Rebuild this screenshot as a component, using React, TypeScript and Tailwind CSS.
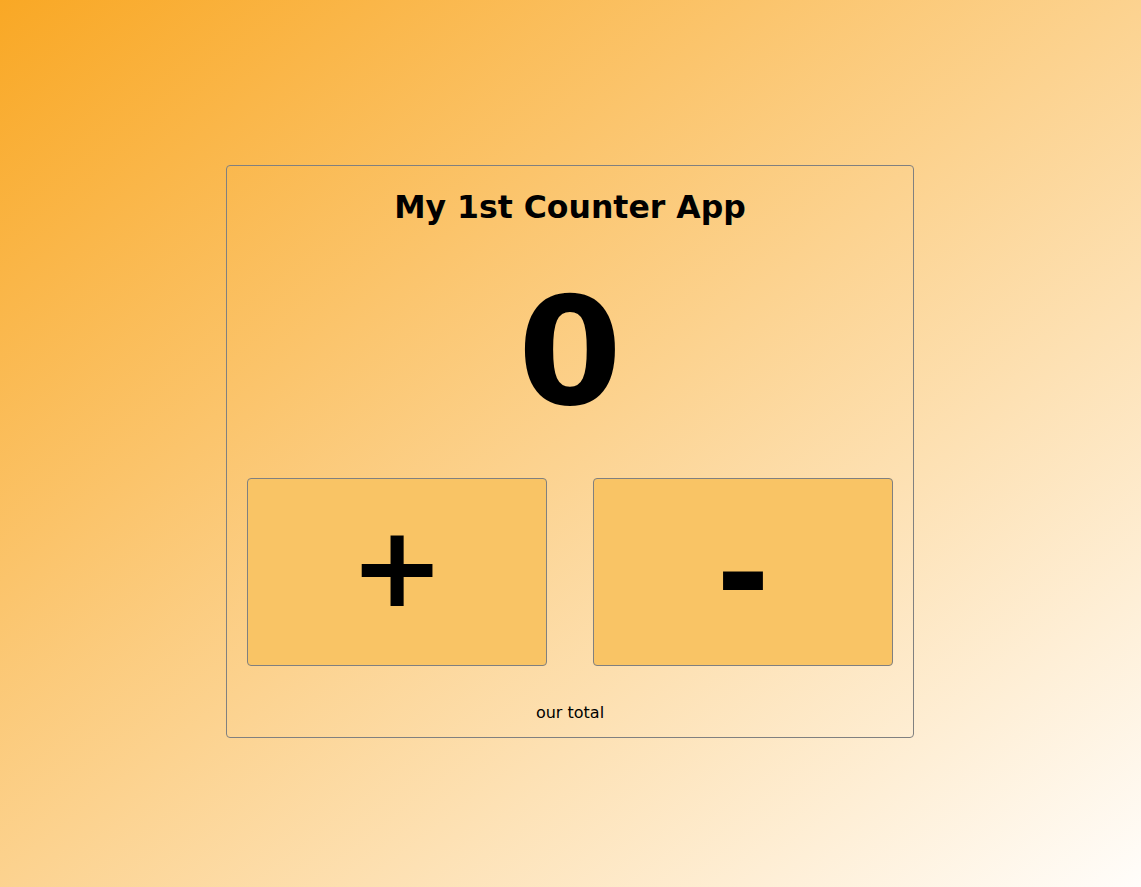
import { useState } from 'react';

export default function App() {
  const [count, setCount] = useState(0);

  return (
    <div
      className="min-h-screen w-full flex justify-center pt-[165px] bg-[linear-gradient(to_bottom_right,#f9a825,#fffdfa)]"
      style={{ fontFamily: '"DejaVu Sans", Verdana, sans-serif' }}
    >
      <div className="w-[688px] h-[573px] mr-px border border-[#808080] rounded-[4px] flex flex-col items-center px-5">
        <h1 className="mt-[21px] text-[31.5px] leading-[40px] font-bold text-black">My 1st Counter App</h1>
        <div className="mt-[30px] text-[150px] leading-[190px] font-bold text-black">{count}</div>
        <div className="mt-[31px] w-full flex justify-between">
          <button
            onClick={() => setCount(count + 1)}
            className="w-[300px] h-[188px] pb-[10px] bg-[#f9c465] border border-[#808080] rounded-[4px] text-[113px] leading-none font-bold text-black flex items-center justify-center"
          >
            +
          </button>
          <button
            onClick={() => setCount(count - 1)}
            className="w-[300px] h-[188px] pt-[2px] bg-[#f9c465] border border-[#808080] rounded-[4px] text-[130px] leading-none font-bold text-black flex items-center justify-center"
          >
            -
          </button>
        </div>
        <p className="mt-[35px] text-base text-black">our total</p>
      </div>
    </div>
  );
}
